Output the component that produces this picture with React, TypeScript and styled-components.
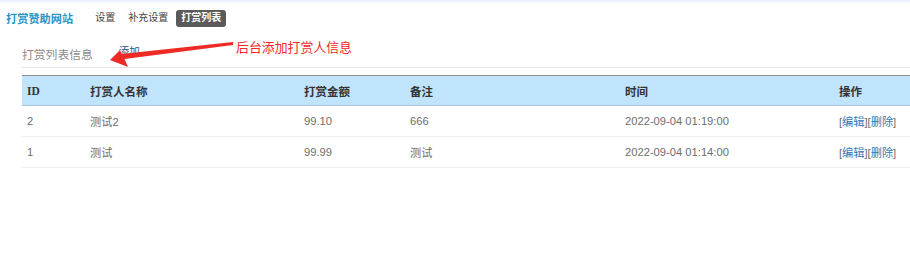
import styled, { createGlobalStyle } from "styled-components";

const GlobalStyle = createGlobalStyle`
  html, body {
    margin: 0;
    padding: 0;
    background: #ffffff;
  }
  body {
    font-family: "Liberation Sans", "Noto Sans CJK SC", sans-serif;
  }
`;

const rows = [
  { id: 2, name: "测试2", amount: "99.10", note: "666", time: "2022-09-04 01:19:00" },
  { id: 1, name: "测试", amount: "99.99", note: "测试", time: "2022-09-04 01:14:00" },
];

const App = () => {
  return (
    <Page>
      <GlobalStyle />
      <Header>
        <Brand>打赏赞助网站</Brand>
        <Nav>
          <NavItem>设置</NavItem>
          <NavItem>补充设置</NavItem>
          <NavItem $active>打赏列表</NavItem>
        </Nav>
      </Header>
      <Section>
        <SectionTitle>
          打赏列表信息
          <AddLink>添加</AddLink>
        </SectionTitle>
        <Table>
          <colgroup>
            <col style={{ width: 63 }} />
            <col style={{ width: 214 }} />
            <col style={{ width: 106 }} />
            <col style={{ width: 215 }} />
            <col style={{ width: 214 }} />
            <col />
          </colgroup>
          <thead>
            <tr>
              <Th>ID</Th>
              <Th>打赏人名称</Th>
              <Th>打赏金额</Th>
              <Th>备注</Th>
              <Th>时间</Th>
              <Th>操作</Th>
            </tr>
          </thead>
          <tbody>
            {rows.map((r) => (
              <tr key={r.id}>
                <Td>{r.id}</Td>
                <Td>{r.name}</Td>
                <Td>{r.amount}</Td>
                <Td>{r.note}</Td>
                <Td>{r.time}</Td>
                <Td>
                  [<OpLink>编辑</OpLink>][<OpLink>删除</OpLink>]
                </Td>
              </tr>
            ))}
          </tbody>
        </Table>
      </Section>
      <Note>后台添加打赏人信息</Note>
      <Arrow width="910" height="263" viewBox="0 0 910 263">
        <polygon
          points="110,60 120,50 121.5,54 233,42 233,45 124.5,59 128,67"
          fill="#ee2a24"
        />
      </Arrow>
    </Page>
  );
};

const Page = styled.div`
  position: relative;
  width: 910px;
  min-height: 263px;
  overflow: hidden;
`;

const Header = styled.div`
  display: flex;
  align-items: center;
  height: 36px;
  padding-left: 6px;
  background: linear-gradient(#eaf2fb 0, #ffffff 4px);
`;

const Brand = styled.div`
  font-size: 11.2px;
  font-weight: bold;
  color: #2b95c6;
`;

const Nav = styled.div`
  display: flex;
  align-items: center;
  gap: 3px;
  margin-left: 17px;
`;

const NavItem = styled.span<{ $active?: boolean }>`
  padding: 2px 5px 3px;
  font-size: 10px;
  line-height: 12px;
  border-radius: 3px;
  color: ${(p) => (p.$active ? "#ffffff" : "#444444")};
  background: ${(p) => (p.$active ? "#5a5a5a" : "transparent")};
  font-weight: ${(p) => (p.$active ? "bold" : "normal")};
`;

const Section = styled.div`
  padding-left: 22px;
`;

const SectionTitle = styled.div`
  display: flex;
  align-items: center;
  height: 22px;
  padding-top: 6px;
  padding-bottom: 3px;
  font-size: 11.8px;
  color: #8a8a8a;
  border-bottom: 1px solid #e6e6e6;
`;

const AddLink = styled.span`
  margin-left: 26px;
  margin-top: -5px;
  font-size: 10.5px;
  color: #2e4f86;
`;

const Table = styled.table`
  width: 888px;
  margin-top: 7px;
  border-collapse: collapse;
  table-layout: fixed;
  border-top: 1px solid #8c8c8c;
`;

const Th = styled.th`
  height: 29px;
  padding: 0 5px;
  text-align: left;
  font-size: 11.5px;
  font-weight: bold;
  color: #333333;
  background: #c0e4fb;
  border-bottom: 1px solid #a9c9dc;
  font-family: "Liberation Serif", "Noto Sans CJK SC", serif;
`;

const Td = styled.td`
  height: 30px;
  padding: 0 5px;
  font-size: 11.2px;
  color: #6e6e6e;
  border-bottom: 1px solid #eeeeee;
  white-space: nowrap;
`;

const OpLink = styled.span`
  color: #2f79b4;
`;

const Note = styled.div`
  position: absolute;
  left: 236px;
  top: 40px;
  font-size: 12.9px;
  line-height: 16px;
  color: #ee2a24;
`;

const Arrow = styled.svg`
  position: absolute;
  left: 0;
  top: 0;
  pointer-events: none;
`;

export default App;
